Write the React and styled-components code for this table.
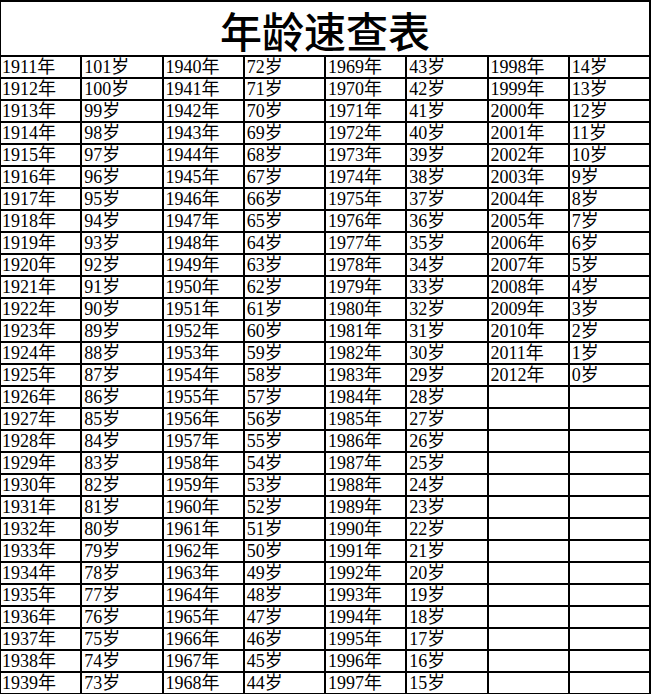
import React from 'react';
import styled, { createGlobalStyle } from 'styled-components';

const GlobalStyle = createGlobalStyle`
  html, body {
    margin: 0;
    padding: 0;
    background: #fff;
  }
`;

const LAST_YEAR = 2012;
const ROWS = 29;
const GROUP_STARTS = [1911, 1940, 1969, 1998];

const Sheet = styled.div`
  display: grid;
  grid-template-columns: repeat(8, 1fr);
  grid-template-rows: 53px repeat(${ROWS}, 20px);
  gap: 2px;
  width: 651px;
  box-sizing: border-box;
  padding: 2px 2px 1px 1px;
  background: #000;
`;

const Title = styled.div`
  grid-column: 1 / -1;
  display: flex;
  align-items: center;
  justify-content: center;
  padding-top: 3px;
  background: #fff;
  font-family: "Noto Sans CJK SC", sans-serif;
  font-weight: 500;
  font-size: 42px;
  line-height: 1;
  color: #000;
`;

const Cell = styled.div`
  background: #fff;
  overflow: hidden;
  white-space: nowrap;
  padding-left: ${(props) => (props.wide ? 1 : 2)}px;
  font-family: "Liberation Serif", "Noto Sans CJK SC", serif;
  font-size: 18px;
  line-height: 20px;
  color: #000;
`;

function buildRows() {
  const rows = [];
  for (let i = 0; i < ROWS; i++) {
    const cells = [];
    GROUP_STARTS.forEach((start) => {
      const year = start + i;
      if (year <= LAST_YEAR) {
        cells.push(`${year}年`, `${LAST_YEAR - year}岁`);
      } else {
        cells.push('', '');
      }
    });
    rows.push(cells);
  }
  return rows;
}

const rows = buildRows();

export default function App() {
  return (
    <>
      <GlobalStyle />
      <Sheet>
        <Title>年龄速查表</Title>
        {rows.map((cells, r) =>
          cells.map((text, c) => (
            <Cell key={`${r}-${c}`} wide={c === 0}>
              {text}
            </Cell>
          ))
        )}
      </Sheet>
    </>
  );
}
